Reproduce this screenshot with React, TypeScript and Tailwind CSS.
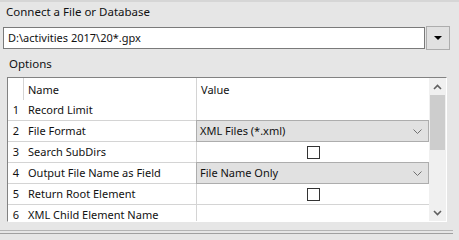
import React from 'react';

const rows = [
  { n: 1, name: 'Record Limit', kind: 'blank' },
  { n: 2, name: 'File Format', kind: 'combo', value: 'XML Files (*.xml)' },
  { n: 3, name: 'Search SubDirs', kind: 'check' },
  { n: 4, name: 'Output File Name as Field', kind: 'combo', value: 'File Name Only' },
  { n: 5, name: 'Return Root Element', kind: 'check' },
  { n: 6, name: 'XML Child Element Name', kind: 'blank' },
];

const Chevron = ({ up = false }: { up?: boolean }) => (
  <svg width="9" height="6" viewBox="0 0 9 6">
    <path
      d={up ? 'M1 5 L4.5 1.5 L8 5' : 'M1 1 L4.5 4.5 L8 1'}
      fill="none"
      stroke="#606060"
      strokeWidth="1.6"
    />
  </svg>
);

const ComboCell = ({ value }: { value: string }) => (
  <div className="relative z-10 -ml-px -mt-px flex h-[22px] flex-1 items-center border border-[#adadad] bg-[#e1e1e1] pl-[3px] pr-[6px]">
    <span className="flex-1">{value}</span>
    <svg width="9" height="5" viewBox="0 0 9 5">
      <path d="M0.5 0.5 L4.5 4.5 L8.5 0.5" fill="none" stroke="#707070" strokeWidth="1" />
    </svg>
  </div>
);

export default function App() {
  return (
    <div className="relative h-[240px] w-[459px] overflow-hidden bg-[#e6e6e6] font-['Noto_Sans',sans-serif] text-[11.5px] leading-[16px] text-[#111]">
      <div className="h-[2px] bg-[#d6d6d6]" />

      <div className="flex h-[24px] items-center pb-[4px] pl-[6px]">Connect a File or Database</div>

      {/* file input + browse dropdown */}
      <div className="flex items-start pl-[3px]">
        <div className="mt-px flex h-[22px] w-[422px] items-center border border-[#7a7a7a] bg-white pl-[4px] text-[11px]">
          D:\activities 2017\20*.gpx
        </div>
        <button className="ml-px flex h-[24px] w-[24px] items-center justify-center border border-[#adadad] bg-[#e1e1e1]">
          <svg width="8" height="5" viewBox="0 0 8 5">
            <path d="M0 0 H8 L4 4 Z" fill="#000" />
          </svg>
        </button>
      </div>

      <div className="flex h-[27px] items-center pl-[9px]">Options</div>

      {/* property grid */}
      <div className="ml-[7px] flex h-[145px] w-[440px] border border-b-white border-l-[#828282] border-r-white border-t-[#828282] text-[11px]">
        <div className="flex-1 overflow-hidden bg-white">
          <div className="flex h-[22px] items-center">
            <div className="h-full w-[16px] border-r border-[#d4d4d4]" />
            <div className="flex h-full w-[173px] items-center border-r border-[#d4d4d4] pl-[4px] pt-[2px]">Name</div>
            <div className="pl-[4px] pt-[2px]">Value</div>
          </div>
          {rows.map((r) => (
            <div key={r.n} className="flex h-[21px] border-b border-[#d4d4d4]">
              <div className="flex w-[16px] items-center justify-center">{r.n}</div>
              <div className="flex w-[173px] items-center border-r border-[#d4d4d4] pl-[4px]">{r.name}</div>
              {r.kind === 'combo' ? (
                <ComboCell value={r.value!} />
              ) : (
                <div className="flex flex-1 items-center justify-center">
                  {r.kind === 'check' && <div className="h-[13px] w-[13px] border border-[#333333] bg-white" />}
                </div>
              )}
            </div>
          ))}
        </div>

        {/* scrollbar */}
        <div className="flex w-[17px] flex-col bg-[#f0f0f0]">
          <div className="flex h-[17px] items-center justify-center">
            <Chevron up />
          </div>
          <div className="mx-px h-[55px] bg-[#cdcdcd]" />
          <div className="flex-1" />
          <div className="flex h-[17px] items-center justify-center">
            <Chevron />
          </div>
        </div>
      </div>

      <div className="mt-[8px] w-[453px] border-t border-[#b4b4b4]" />
      <div className="mt-[2px] w-[453px] border-t border-[#a0a0a0]" />

      <div className="mt-[2px] flex w-[453px] items-start justify-between pl-[7px] pr-[6px]">
        <span>Preview</span>
        <span className="text-[#2222ff] underline">Update Sample</span>
      </div>
    </div>
  );
}
